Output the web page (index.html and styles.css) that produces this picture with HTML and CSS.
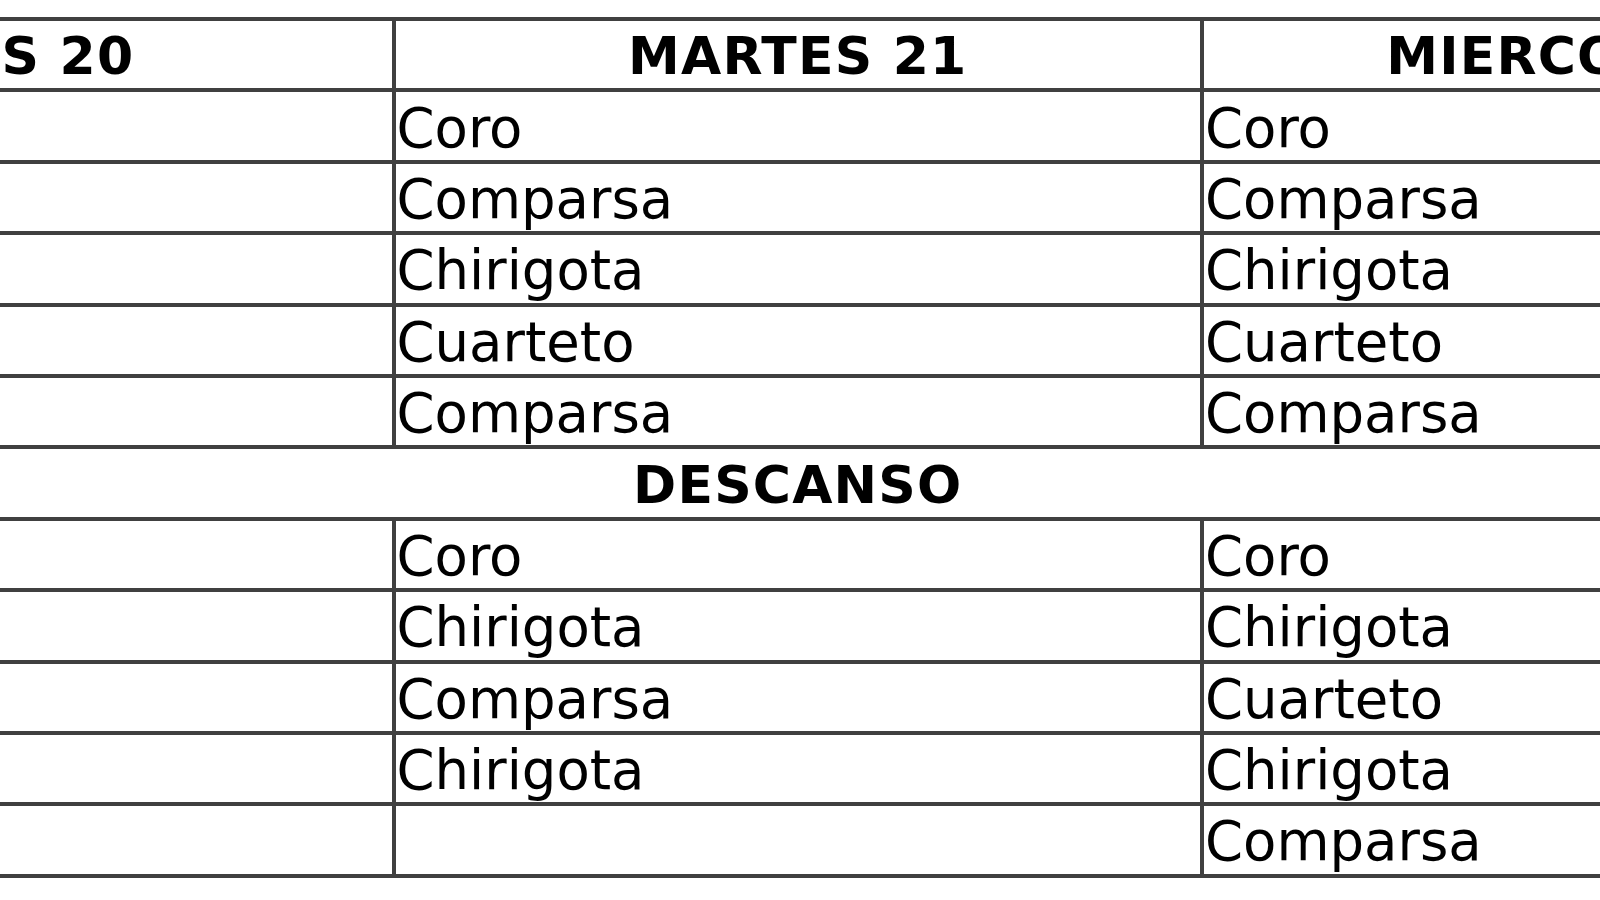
FILE: index.html
```html
<!DOCTYPE html>
<html lang="es">
<head>
<meta charset="utf-8">
<title>Programación</title>
<link rel="stylesheet" href="styles.css">
</head>
<body>
<div class="viewport">
  <table class="schedule">
    <colgroup>
      <col class="col-day">
      <col class="col-day">
      <col class="col-day">
    </colgroup>
    <thead>
      <tr>
        <th class="day">LUNES 20</th>
        <th class="day">MARTES 21</th>
        <th class="day">MIERCOLES 22</th>
      </tr>
    </thead>
    <tbody>
      <tr><td></td><td>Coro</td><td>Coro</td></tr>
      <tr><td></td><td>Comparsa</td><td>Comparsa</td></tr>
      <tr><td></td><td>Chirigota</td><td>Chirigota</td></tr>
      <tr><td></td><td>Cuarteto</td><td>Cuarteto</td></tr>
      <tr><td></td><td>Comparsa</td><td>Comparsa</td></tr>
      <tr><th class="break" colspan="3">DESCANSO</th></tr>
      <tr><td></td><td>Coro</td><td>Coro</td></tr>
      <tr><td></td><td>Chirigota</td><td>Chirigota</td></tr>
      <tr><td></td><td>Comparsa</td><td>Cuarteto</td></tr>
      <tr><td></td><td>Chirigota</td><td>Chirigota</td></tr>
      <tr><td></td><td></td><td>Comparsa</td></tr>
    </tbody>
  </table>
</div>
</body>
</html>
```
FILE: styles.css
```css
html, body {
  margin: 0;
  padding: 0;
  background: #ffffff;
}

.viewport {
  width: 1600px;
  height: 900px;
  overflow: hidden;
}

.schedule {
  border-collapse: collapse;
  table-layout: fixed;
  width: 2429.5px;
  margin: 17px 0 0 -417px;
  font-family: "DejaVu Sans", Verdana, sans-serif;
  color: #000000;
}

.col-day {
  width: 808.5px;
}

.schedule th,
.schedule td {
  border: 4px solid #404040;
  height: 64.4px;
  padding: 3px 1px 0;
  vertical-align: middle;
  white-space: nowrap;
  overflow: hidden;
}

.schedule td {
  font-size: 54.5px;
  font-weight: normal;
  text-align: left;
}

.schedule th {
  font-size: 52px;
  font-weight: bold;
  letter-spacing: 1.2px;
  text-align: center;
}
```
